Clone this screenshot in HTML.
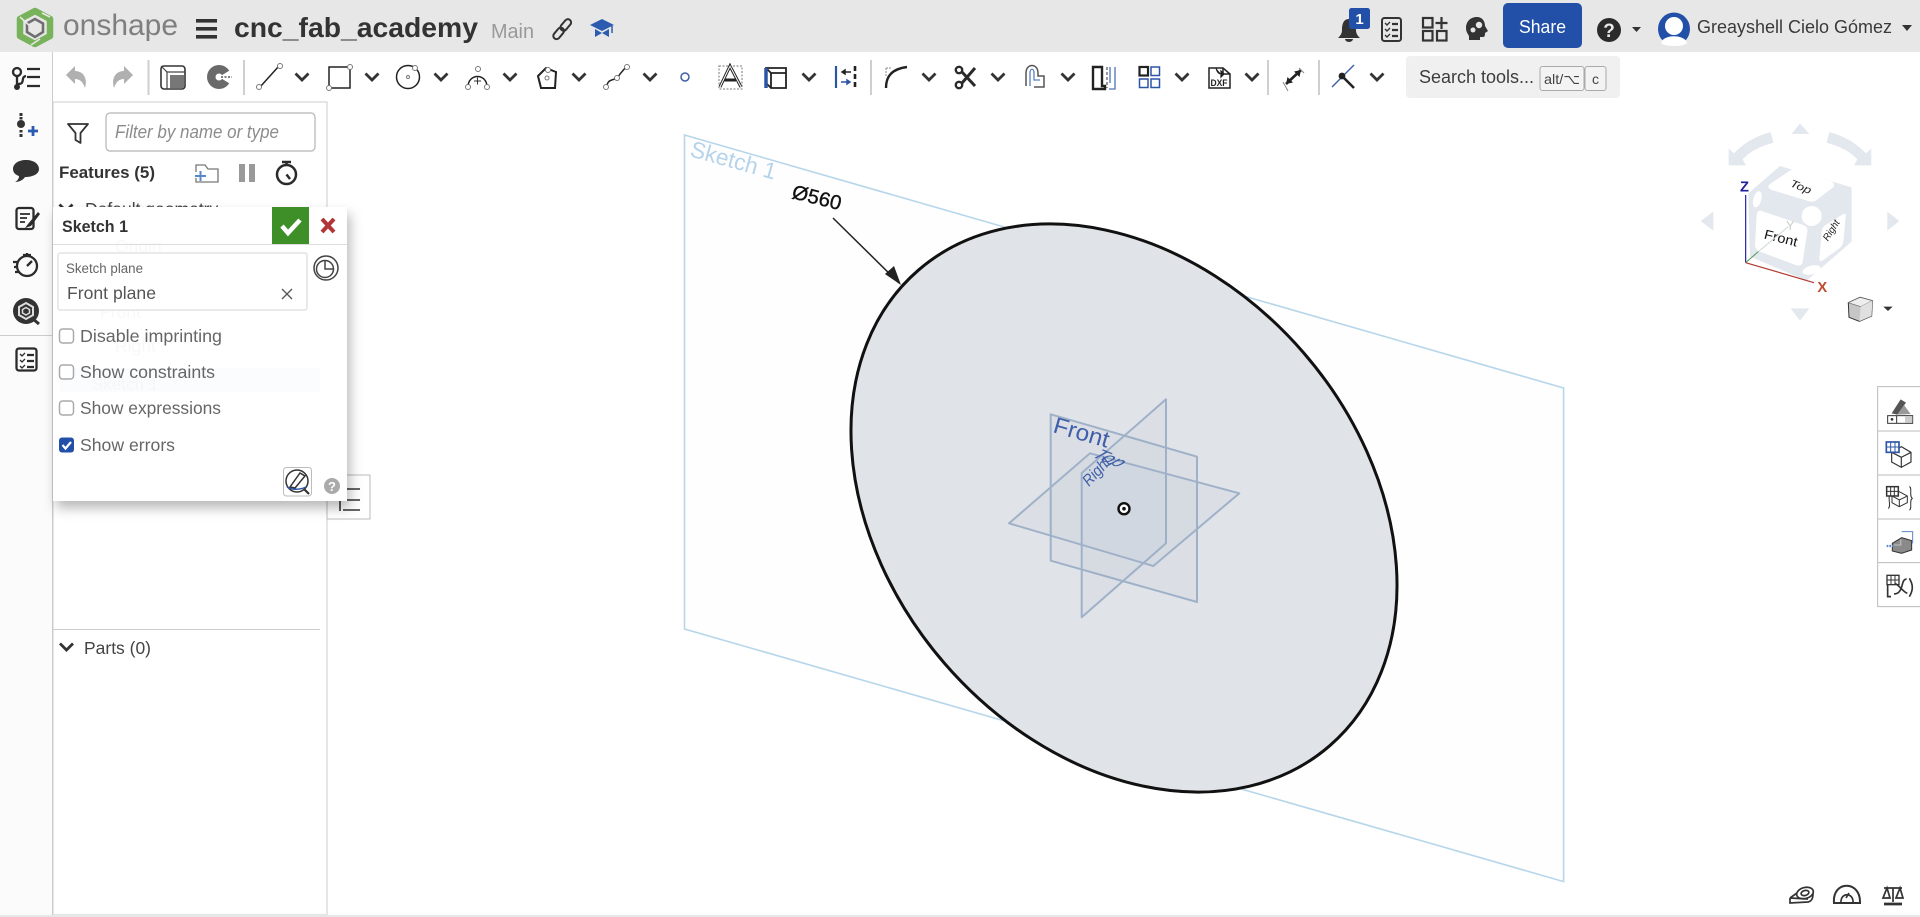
<!DOCTYPE html>
<html lang="en">
<head>
<meta charset="utf-8">
<title>cnc_fab_academy - Onshape</title>
<style>
html,body{margin:0;padding:0;width:1920px;height:917px;overflow:hidden;background:#fff}
svg{display:block;font-family:"Liberation Sans","DejaVu Sans",sans-serif}
</style>
</head>
<body>
<svg xmlns="http://www.w3.org/2000/svg" width="1920" height="917" viewBox="0 0 1920 917">
<defs>
<path id="ch" d="M-6.5-3.5L0 3L6.5-3.5" fill="none" stroke="#333" stroke-width="2.8"/>
<filter id="sh" x="-10%" y="-10%" width="125%" height="125%"><feDropShadow dx="3" dy="7" stdDeviation="6" flood-color="#000" flood-opacity=".28"/></filter>
</defs>
<rect width="1920" height="917" fill="#fff"/>

<!-- viewport geometry -->
<polygon points="684.5,135 1563.6,388 1563.6,881.6 684.5,629" fill="#fefefe" stroke="#b7d6ea" stroke-width="1.6"/>
<text transform="translate(689,156) rotate(15.6)" font-size="23" fill="#b5d3ea" textLength="88" lengthAdjust="spacingAndGlyphs">Sketch 1</text>
<text transform="translate(791,198) rotate(14)" font-size="20" fill="#111" stroke="#111" stroke-width=".35" textLength="50" lengthAdjust="spacingAndGlyphs">Ø560</text>
<path d="M833 218L899 283" stroke="#222" stroke-width="1.5"/>
<polygon points="901,285 885,274 894,266" fill="#222"/>
<ellipse cx="1124" cy="508" rx="314.4" ry="237.4" transform="rotate(49.15 1124 508)" fill="#e0e4e8" stroke="#111" stroke-width="3"/>
<g stroke="#9fb1c8" stroke-width="2" fill="#9fb1c8" fill-opacity=".07" stroke-linejoin="round">
<polygon points="1050.7,414.3 1197,456.7 1197,602 1050.7,560.7"/>
<polygon points="1166,399.3 1166,543.3 1081.7,617.3 1081.7,473"/>
<polygon points="1009,523.3 1090,453.3 1239.3,493.3 1153.3,566"/>
</g>
<text transform="translate(1052,432) rotate(16)" font-size="23" fill="#3f5fa8" textLength="57" lengthAdjust="spacingAndGlyphs">Front</text>
<text transform="translate(1089,487) rotate(-47)" font-size="16" font-style="italic" fill="#3f5fa8" textLength="33" lengthAdjust="spacingAndGlyphs">Right</text>
<text transform="translate(1090,456) rotate(22) skewX(-40)" font-size="16" fill="#3f5fa8" textLength="30" lengthAdjust="spacingAndGlyphs">Top</text>
<circle cx="1124" cy="508.7" r="5.5" fill="#fff" stroke="#111" stroke-width="2.4"/>
<circle cx="1124" cy="508.7" r="1.8" fill="#111"/>

<!-- header -->
<rect width="1920" height="52" fill="#e7e7e7"/>
<g fill="none">
<polygon points="35,11 50,19 50,36 35,44 20,36 20,19" stroke="#78b25a" stroke-width="6.5" stroke-linejoin="round"/>
<polygon points="35,19 43,23.5 43,32 35,37 27,32 27,23.5" stroke="#6f6f6f" stroke-width="2.6"/>
<path d="M20 17L30 26M50 17L42 13M31 45L40 39" stroke="#e7e7e7" stroke-width="1.6"/>
</g>
<text x="63" y="35" font-size="30" fill="#7f7f7f" textLength="115" lengthAdjust="spacingAndGlyphs">onshape</text>
<g fill="#333"><rect x="196" y="19" width="21" height="3.6"/><rect x="196" y="27" width="21" height="3.6"/><rect x="196" y="35" width="21" height="3.6"/></g>
<text x="234" y="37" font-size="28" font-weight="700" fill="#333" textLength="244" lengthAdjust="spacingAndGlyphs">cnc_fab_academy</text>
<text x="491" y="38" font-size="20" fill="#999" textLength="43" lengthAdjust="spacingAndGlyphs">Main</text>
<g fill="none" stroke="#333" stroke-width="2" transform="rotate(-50 562 29)"><rect x="550" y="26" width="13" height="6.500" rx="3.200"/><rect x="561" y="26" width="13" height="6.500" rx="3.200"/></g>
<path d="M590 25L602 19L614 25L602 31Z" fill="#2b5cb0"/><path d="M595 29V37L602 33L609 37V29L602 33Z" fill="#2b5cb0"/><path d="M612 26V33" stroke="#2b5cb0" stroke-width="1.500"/>

<!-- bell -->
<path d="M1349 19C1343 19 1342 25 1342 30C1342 34 1340 36 1338 38H1360C1358 36 1356 34 1356 30C1356 25 1355 19 1349 19Z" fill="#333"/><path d="M1345 39a4 3 0 0 0 8 0Z" fill="#333"/>
<rect x="1349" y="8" width="21" height="21" rx="2.500" fill="#2250a8"/><text x="1359.500" y="24" font-size="15" font-weight="700" fill="#fff" text-anchor="middle">1</text>
<g fill="none" stroke="#333" stroke-width="2"><rect x="1382" y="18" width="19" height="23" rx="2.500"/><path d="M1385 23l2 2l3-3M1385 29l2 2l3-3M1385 35l2 2l3-3" stroke-width="1.400"/><path d="M1392 24h6M1392 30h6M1392 36h6" stroke-width="2.200"/></g>
<g fill="none" stroke="#333" stroke-width="2.200"><rect x="1423" y="18" width="9.500" height="9.500"/><rect x="1423" y="31" width="9.500" height="9.500"/><rect x="1437" y="31" width="9.500" height="9.500"/><path d="M1441.500 17V29M1435.500 23H1447.500"/></g>
<path d="M1477 17C1470 17 1466 22 1466 28C1466 32 1468 34 1469 36V40H1480V37H1483C1485 37 1485 35 1485 33L1488 31L1485 26C1485 21 1482 17 1477 17Z" fill="#333"/><circle cx="1479" cy="25" r="3.200" fill="#e7e7e7"/><circle cx="1473" cy="30" r="2.500" fill="#e7e7e7"/>
<rect x="1503" y="3" width="79" height="45" rx="5" fill="#2250a8"/>
<text x="1519" y="33" font-size="18" fill="#fff" textLength="47" lengthAdjust="spacingAndGlyphs">Share</text>
<circle cx="1609" cy="30" r="12" fill="#2b2b2b"/><text x="1609" y="37" font-size="19" font-weight="700" fill="#e7e7e7" text-anchor="middle">?</text>
<polygon points="1632,27 1641,27 1636.500,32" fill="#333"/>
<ellipse cx="1674" cy="29" rx="16" ry="16.500" fill="#2250a8"/><circle cx="1674" cy="26" r="9" fill="#fff"/><path d="M1661 43C1663 34 1685 34 1687 43C1683 47 1665 47 1661 43Z" fill="#fff"/>
<text x="1697" y="33" font-size="18" fill="#3a3a3a" textLength="195" lengthAdjust="spacingAndGlyphs">Greayshell Cielo Gómez</text>
<polygon points="1902,25 1912,25 1907,31" fill="#333"/>

<!-- toolbar -->
<g fill="#b0b0b0">
<path d="M66 75L75 66V71C83 71 88 78 85 88C83 82 80 79 75 79V84Z"/>
<path d="M133 75L124 66V71C116 71 111 78 114 88C116 82 119 79 124 79V84Z"/>
</g>
<g fill="#cfcfcf">
<rect x="147.500" y="60" width="2" height="35"/><rect x="243" y="60" width="2" height="35"/><rect x="870" y="60" width="2" height="35"/><rect x="1267" y="60" width="2" height="35"/><rect x="1318" y="60" width="2" height="35"/>
</g>
<rect x="161" y="66" width="24" height="23" rx="3" fill="#fff" stroke="#333" stroke-width="1.600"/><path d="M161 66L167 72H185M167 72V89" fill="none" stroke="#444" stroke-width="1.200"/><rect x="170" y="75" width="14" height="13" fill="#777"/>
<circle cx="219" cy="77" r="12" fill="#6a6a6a"/><path d="M219 77L232 69V85Z" fill="#fff"/><circle cx="219" cy="77" r="3.500" fill="#fff"/><path d="M221 77H232" stroke="#333" stroke-width="1.200" stroke-dasharray="2 1.500"/>

<g fill="none" stroke="#222" stroke-width="1.500">
<path d="M260 87L279 66"/><rect x="329" y="67" width="21" height="21"/>
<circle cx="408" cy="77" r="11.500"/>
<path d="M468 87C468 73 487 73 487 87"/>
<path d="M538 76L546 68L556 72L555 88H541Z" stroke-width="2"/>
<path d="M607 87C607 78 615 81 618 77C621 72 622 72 626 67"/>
<path d="M720 87L730 66L741 87M724 80H736" stroke-width="3"/><path d="M720 87L730 66L741 87" stroke="#fff" stroke-width="1"/>
<path d="M766 68H786V88H771L766 83ZM771 88V73L766 68M771 73H786" stroke-width="1.800"/>
<path d="M886 88C886 76 892 69 907 67" stroke-width="2.400"/>
<path d="M1209 68H1223L1230 74V88H1209Z"/><path d="M1223 68V74H1230"/>
</g>
<path d="M1026 86V73C1026 63 1038 63 1038 73V76H1044V87H1034" fill="none" stroke="#555" stroke-width="1.500"/>
<path d="M1030 86V73C1030 68 1034 68 1034 73V80H1040" fill="none" stroke="#5a7fc0" stroke-width="1.300"/>
<g fill="#fff" stroke="#777" stroke-width="1"><circle cx="259" cy="87" r="2.500"/><circle cx="280" cy="66" r="2.500"/><circle cx="329" cy="88" r="2.500"/><circle cx="350" cy="67" r="2.500"/><circle cx="415" cy="68" r="2.500"/><circle cx="408" cy="77" r="1.500"/><circle cx="468" cy="87" r="2.500"/><circle cx="487" cy="87" r="2.500"/><circle cx="478" cy="69" r="2.500"/><circle cx="548" cy="70" r="2.500"/><circle cx="547" cy="78" r="2"/><circle cx="606" cy="87" r="2.500"/><circle cx="627" cy="67" r="2.500"/><circle cx="617" cy="78" r="2.500"/></g>
<path d="M474 81H481M477.500 77.500V84.500" stroke="#333" stroke-width="1"/>
<circle cx="685" cy="77" r="4" fill="none" stroke="#3d5fa8" stroke-width="1.500"/>
<rect x="719" y="66" width="23" height="23" fill="none" stroke="#777" stroke-width="1" stroke-dasharray="2 1.500"/>
<path d="M766 68V88" stroke="#2d55a5" stroke-width="3.500"/>
<path d="M836 66V88" stroke="#2d55a5" stroke-width="2.200"/><path d="M855 66V88" stroke="#222" stroke-width="2.600" stroke-dasharray="5 3"/><path d="M851 72H842M842 72l3-2v4z" stroke="#222" stroke-width="1.500" fill="#222"/><path d="M841 82H850M850 82l-3-2v4z" stroke="#2d55a5" stroke-width="1.500" fill="#2d55a5"/>
<path d="M886 68H892M886 68V76" stroke="#888" stroke-width="1" stroke-dasharray="2 1"/>
<g fill="none" stroke="#2a2a2a"><circle cx="959" cy="70" r="3.200" stroke-width="2.400"/><circle cx="959" cy="85" r="3.200" stroke-width="2.400"/><path d="M962 72L975 86M962 83L975 68" stroke-width="3"/></g>
<path d="M1093 67H1102V86H1105V89H1093Z" fill="#fff" stroke="#222" stroke-width="2.400"/><path d="M1107 67V88" stroke="#555" stroke-width="1.200" stroke-dasharray="3 2"/><path d="M1115 67V89H1109M1110 67V83" fill="none" stroke="#4f74b8" stroke-width="1.300"/>
<g fill="none" stroke="#2d55a5" stroke-width="1.500"><rect x="1139.500" y="67" width="8.500" height="8.500" stroke="#222" stroke-width="2.200"/><rect x="1151" y="67" width="8.500" height="8.500"/><rect x="1139.500" y="79" width="8.500" height="8.500"/><rect x="1151" y="79" width="8.500" height="8.500"/></g>
<text x="1210.500" y="86" font-size="9.500" font-weight="700" fill="#222" textLength="17" lengthAdjust="spacingAndGlyphs">DXF</text><path d="M1216 68C1217 72 1219 74 1221 74M1221 71v6l3-3z" fill="#222" stroke="#222" stroke-width="1.200"/>
<path d="M1286 84L1301 70" stroke="#222" stroke-width="2.600"/><path d="M1301 70l-7 1.500l5.500 5.500zM1286 84l7-1.500l-5.500-5.500z" fill="#222"/><path d="M1283 82L1288 91M1299 68L1304 73" stroke="#888" stroke-width="1"/>
<path d="M1332 87L1354 65" stroke="#3d5fa8" stroke-width="1.400"/><circle cx="1342" cy="76" r="3.400" fill="#222"/><path d="M1343 77L1354 88" stroke="#222" stroke-width="2.600"/>
<use href="#ch" x="302" y="77"/><use href="#ch" x="372" y="77"/><use href="#ch" x="441" y="77"/><use href="#ch" x="510" y="77"/><use href="#ch" x="579" y="77"/><use href="#ch" x="650" y="77"/><use href="#ch" x="809" y="77"/><use href="#ch" x="929" y="77"/><use href="#ch" x="998" y="77"/><use href="#ch" x="1068" y="77"/><use href="#ch" x="1182" y="77"/><use href="#ch" x="1252" y="77"/><use href="#ch" x="1377" y="77"/>
<rect x="1406" y="56" width="214" height="42" rx="4" fill="#f0f0f0"/>
<text x="1419" y="83" font-size="18" fill="#3d3d3d" textLength="115" lengthAdjust="spacingAndGlyphs">Search tools...</text>
<rect x="1540" y="66.500" width="44" height="24" rx="2.500" fill="#f3f3f3" stroke="#aaa"/><text x="1544" y="84" font-size="14" fill="#444" textLength="36" lengthAdjust="spacingAndGlyphs">alt/⌥</text>
<rect x="1585" y="66.500" width="21" height="24" rx="2.500" fill="#f3f3f3" stroke="#aaa"/><text x="1595.500" y="84" font-size="14" fill="#444" text-anchor="middle">c</text>

<!-- left rail -->
<rect x="0" y="52" width="52" height="865" fill="#fbfbfb"/>
<rect x="52" y="52" width="1" height="863" fill="#ccc"/>
<g fill="none" stroke="#2b2b2b" stroke-width="2.300"><circle cx="17" cy="72" r="4"/><path d="M17 76V87M18 84C26 84 20 77 26 76M27 69H40M27 77H40M27 86H40"/></g><circle cx="17" cy="87" r="3" fill="#2b2b2b"/>
<g fill="#333"><circle cx="21" cy="124" r="4"/><rect x="19.500" y="113" width="3" height="3"/><rect x="19.500" y="117" width="3" height="2.500"/><rect x="19.500" y="130" width="3" height="2.500"/><rect x="19.500" y="134" width="3" height="3"/></g><path d="M28 131H38M33 126V136" stroke="#2b5cb0" stroke-width="2.800"/>
<path d="M26 160C18 160 13 164 13 169C13 173 16 175 19 176C19 179 17 181 15 182C20 182 24 179 25 177C33 177 39 174 39 169C39 164 34 160 26 160Z" fill="#333"/>
<g fill="none" stroke="#2b2b2b"><rect x="16.500" y="208" width="17" height="21" rx="2.500" stroke-width="2.300"/><path d="M20 214H30M20 218H27M20 222H25" stroke-width="1.800"/></g><path d="M38 212L28 224L25 228L31 226L40 214Z" fill="#2b2b2b"/>
<g fill="none" stroke="#2b2b2b" stroke-width="2.300"><circle cx="27" cy="266" r="10"/><path d="M23 255H31M27 255V253M27 266L32 261M13 262H17M14 267H18M15 272H19"/></g>
<circle cx="26" cy="311" r="13" fill="#333"/><polygon points="26,303 33,307 33,315 26,319 19,315 19,307" fill="none" stroke="#ddd" stroke-width="2"/><polygon points="26,307.500 29.500,309.500 29.500,313 26,315 22.500,313 22.500,309.500" fill="none" stroke="#ddd" stroke-width="1.500"/><path d="M33 319L39 324" stroke="#333" stroke-width="3"/>
<rect x="0" y="335" width="52" height="1" fill="#ccc"/>
<g fill="none" stroke="#2b2b2b"><rect x="16.500" y="348.500" width="20" height="22" rx="2.500" stroke-width="2.300"/><path d="M20 354l2 2l3-3M20 360l2 2l3-3M20 366l2 2l3-3" stroke-width="1.300"/><path d="M27 355H34M27 361H34M27 367H34" stroke-width="2.200"/></g>

<!-- feature panel -->
<rect x="53" y="102" width="274" height="813" fill="#fff" stroke="#ccc"/>
<path d="M68 124H88L80.500 133V143L75.500 140V133Z" fill="none" stroke="#333" stroke-width="1.800" stroke-linejoin="round"/>
<rect x="106" y="113" width="209" height="38" rx="4" fill="#fff" stroke="#b5b5b5" stroke-width="1.200"/>
<text x="115" y="138" font-size="18" font-style="italic" fill="#8c8c8c" textLength="164" lengthAdjust="spacingAndGlyphs">Filter by name or type</text>
<text x="59" y="178" font-size="17" font-weight="700" fill="#333" textLength="96" lengthAdjust="spacingAndGlyphs">Features (5)</text>
<path d="M196 172V165H205L208 169H218V182H196V178" fill="none" stroke="#777" stroke-width="1.300"/><path d="M195 176H206M200.500 171V181" stroke="#5a86cc" stroke-width="2"/>
<rect x="239" y="164" width="6" height="18" fill="#999"/><rect x="249" y="164" width="6" height="18" fill="#999"/>
<g fill="none" stroke="#2b2b2b" stroke-width="2.500"><circle cx="286.500" cy="174.500" r="9.500"/><path d="M282 162H291M286.500 162V165M286.500 174.500L290 179"/></g>
<use href="#ch" x="66" y="208"/><text x="85" y="215" font-size="17.500" fill="#444">Default geometry</text>
<text x="84" y="654" font-size="17.500" fill="#444" textLength="67" lengthAdjust="spacingAndGlyphs">Parts (0)</text>
<use href="#ch" x="66.500" y="647" />
<rect x="53" y="629" width="267" height="1" fill="#ccc"/>
<rect x="327" y="475" width="43" height="44" fill="#fff" stroke="#bbb"/>
<path d="M347 489H360M343 500H360M343 510H360" stroke="#333" stroke-width="1.400"/><path d="M340 501V511" stroke="#333" stroke-width="1.600"/>

<!-- sketch dialog -->
<rect x="53" y="207" width="294" height="294" fill="#fff" filter="url(#sh)"/>
<rect x="54" y="245" width="292" height="255" fill="#fff"/>
<g fill="#f8f8f8" font-size="17.500"><text x="115" y="252">Origin</text><text x="115" y="287">Top</text><text x="100" y="318">Front</text><text x="115" y="352">Right</text></g>
<rect x="60" y="368" width="260" height="24" fill="#fbfcfe"/>
<text x="92" y="390" font-size="17" fill="#f6f6f6">Sketch 1</text>
<rect x="53" y="244" width="294" height="1" fill="#ddd"/>
<text x="62" y="232" font-size="17" font-weight="700" fill="#333" textLength="66" lengthAdjust="spacingAndGlyphs">Sketch 1</text>
<rect x="272" y="207" width="37" height="37" fill="#3f8f29"/>
<path d="M282 226L288 233L300 220" fill="none" stroke="#fff" stroke-width="4.500"/>
<path d="M322 219L334 232M334 219L322 232" stroke="#b13438" stroke-width="4"/>
<rect x="58" y="253" width="249" height="57" rx="2" fill="#fff" stroke="#ddd" stroke-width="1.200"/>
<text x="66" y="273" font-size="13.500" fill="#666" textLength="77" lengthAdjust="spacingAndGlyphs">Sketch plane</text>
<text x="67" y="299" font-size="17.500" fill="#555" textLength="89" lengthAdjust="spacingAndGlyphs">Front plane</text>
<path d="M282 289L292 299M292 289L282 299" stroke="#555" stroke-width="1.300"/>
<g fill="none" stroke="#444" stroke-width="1.500"><circle cx="326" cy="268" r="12"/><circle cx="325" cy="269" r="8.500"/><path d="M325 260.500V269H333.500"/></g>
<g fill="#fff" stroke="#aaa" stroke-width="1.500"><rect x="59.500" y="329" width="14" height="14" rx="3"/><rect x="59.500" y="365" width="14" height="14" rx="3"/><rect x="59.500" y="401" width="14" height="14" rx="3"/></g>
<rect x="59" y="437.500" width="15" height="15" rx="3" fill="#2250a8"/><path d="M62.500 445L65.500 448.500L71 442" fill="none" stroke="#fff" stroke-width="2.200"/>
<g font-size="17.500" fill="#666">
<text x="80" y="342" textLength="142" lengthAdjust="spacingAndGlyphs">Disable imprinting</text>
<text x="80" y="378" textLength="135" lengthAdjust="spacingAndGlyphs">Show constraints</text>
<text x="80" y="414" textLength="141" lengthAdjust="spacingAndGlyphs">Show expressions</text>
<text x="80" y="451" textLength="95" lengthAdjust="spacingAndGlyphs">Show errors</text>
</g>
<rect x="283.500" y="467.500" width="28" height="28.500" rx="3" fill="#fff" stroke="#bbb"/>
<g fill="none" stroke="#333" stroke-width="1.500"><circle cx="297" cy="481" r="11"/><path d="M290 487L300 473L305 476L295 488Z"/><path d="M304 489L309 494" stroke-width="2.200"/></g><path d="M287 487C292 490 300 490 306 487" fill="none" stroke="#2d55a5" stroke-width="1.500"/>
<circle cx="332" cy="486" r="8" fill="#aaa"/><text x="332" y="491" font-size="13" font-weight="700" fill="#fff" text-anchor="middle">?</text>

<!-- nav cube -->
<g transform="translate(1680 110) scale(.3333)">
<g fill="#e3e7ee">
<polygon points="360,40 335,72 388,72"/><polygon points="62,333 100,305 100,362"/><polygon points="658,333 622,305 622,362"/><polygon points="360,632 332,595 388,595"/>
<path d="M272 66L280 98C238 110 208 126 188 148L198 166H146V116L162 130C190 100 228 78 272 66Z"/>
<path d="M448 66L440 98C482 110 512 126 532 148L522 166H574V116L558 130C530 100 492 78 448 66Z"/>
<polygon points="300,168 515,232 515,395 380,512 210,440 205,250"/>
</g>
<g fill="#fff">
<path d="M350 180L455 215Q470 225 455 235L410 270Q400 278 385 273L275 240Q258 232 270 222L325 185Q335 176 350 180Z"/>
<path d="M245 303L370 345Q385 352 382 365L368 455Q365 470 350 466L240 425Q225 418 225 405L230 315Q232 298 245 303Z"/>
<path d="M490 312Q500 308 497 320L490 395Q488 408 478 415L430 450Q418 458 418 445L425 365Q426 352 435 346Z"/>
<circle cx="395" cy="318" r="30"/><ellipse cx="232" cy="268" rx="12" ry="25" transform="rotate(15 232 268)"/><ellipse cx="395" cy="480" rx="28" ry="13" transform="rotate(-15 395 480)"/>
</g>
<text transform="translate(328 228) rotate(22)" font-size="32" font-style="italic" fill="#222" textLength="66" lengthAdjust="spacingAndGlyphs">Top</text>
<text transform="translate(250 385) rotate(14)" font-size="40" fill="#111" textLength="102" lengthAdjust="spacingAndGlyphs">Front</text>
<text transform="translate(444 395) rotate(-58)" font-size="30" font-style="italic" fill="#222" textLength="68" lengthAdjust="spacingAndGlyphs">Right</text>
<path d="M197 255V458" stroke="#1f1fa0" stroke-width="3.500"/>
<path d="M197 458L235 425" stroke="#4c9a50" stroke-width="3"/><path d="M235 425L325 350" stroke="#cfd8cf" stroke-width="3"/>
<path d="M197 458L402 518" stroke="#b03a30" stroke-width="3.500"/>
<text x="180" y="245" font-size="44" font-weight="700" fill="#1f1fa0">Z</text>
<text x="318" y="360" font-size="38" fill="#c8cec8">Y</text>
<text x="412" y="546" font-size="44" font-weight="700" fill="#c04a30">X</text>
<polygon points="505,578 540,562 577,572 575,618 538,634 507,622" fill="#c6c6c6" stroke="#333" stroke-width="3"/>
<polygon points="505,578 540,562 577,572 542,590" fill="#eee" stroke="#666" stroke-width="2"/>
<polygon points="542,590 577,572 575,618 538,634" fill="#e0e0e0"/>
<polygon points="610,590 638,590 624,603" fill="#333"/>
</g>

<!-- right tool strip -->
<g transform="translate(1780 370) scale(.3333)">
<path d="M420 50H293V710H420" fill="#fff" stroke="#bbb" stroke-width="3"/>
<path d="M293 183H420M293 315H420M293 447H420M293 578H420" stroke="#bbb" stroke-width="3"/>
<polygon points="335,130 362,88 378,98 352,134" fill="#555"/><polygon points="352,134 372,105 392,132" fill="#999"/>
<rect x="323" y="137" width="75" height="23" fill="#fff" stroke="#333" stroke-width="3"/><rect x="375" y="139" width="22" height="19" fill="#ccc"/><circle cx="336" cy="148" r="4" fill="#333"/><path d="M350 137V160" stroke="#333" stroke-width="3"/>
<g fill="none" stroke="#333" stroke-width="3.500"><polygon points="364,230 393,247 393,276 364,292 335,276 335,247"/><path d="M335 247L364 262L393 247M364 262V292"/></g>
<rect x="319" y="216" width="38" height="31" fill="#fff" stroke="#2d55a5" stroke-width="5"/><path d="M319 231H357M332 216V247M345 216V247" stroke="#2d55a5" stroke-width="3"/>
<g fill="none" stroke="#333" stroke-width="3"><polygon points="358,365 382,378 382,398 358,410 336,398 336,378"/><path d="M336 378L358 390L382 378M358 390V410"/><path d="M388 350C398 352 386 382 398 385C386 388 398 418 388 420M332 375C320 378 336 412 324 415" /></g>
<rect x="320" y="350" width="35" height="28" fill="#fff" stroke="#333" stroke-width="4.500"/><path d="M320 364H355M332 350V378M343 350V378" stroke="#333" stroke-width="3"/>
<polygon points="337,520 365,503 395,512 395,540 365,550 337,543" fill="#8a8a8a" stroke="#333" stroke-width="3"/><path d="M342 525H362V508" fill="none" stroke="#bbb" stroke-width="4"/><path d="M365 485H398V520" fill="none" stroke="#5a86cc" stroke-width="3"/><path d="M320 528H340" stroke="#5a86cc" stroke-width="7" stroke-dasharray="5 3"/>
<g fill="none" stroke="#333"><rect x="321" y="616" width="36" height="28" stroke-width="4"/><path d="M321 630H357M333 616V644M345 616V644" stroke-width="3"/><path d="M323 644V680H333" stroke-width="5"/><path d="M388 625C400 645 400 660 388 680M342 672C355 672 362 665 368 640C372 625 380 628 380 628M345 640C360 648 368 665 382 670" stroke-width="5"/></g>
</g>

<!-- bottom tools -->
<g fill="none" stroke="#333" stroke-width="1.700">
<ellipse cx="1805" cy="893" rx="8.500" ry="5.500" transform="rotate(-15 1805 893)"/><ellipse cx="1805" cy="893" rx="4" ry="2.500" transform="rotate(-15 1805 893)"/>
<path d="M1790 898L1797 893M1790 898V903L1808 902C1813 901 1813 896 1813 893M1790 898L1808 899"/>
<path d="M1834 903C1832 880 1861 880 1860 903Z" stroke-width="2"/><path d="M1841 903C1840 892 1854 892 1853 903"/><path d="M1846 898L1849 893" />
<path d="M1893 888V902M1884 888H1902M1883 898L1887 888L1890 898ZM1896 898L1900 888L1903 898Z"/><path d="M1884 904H1902" stroke-width="2.800"/>
</g>
<rect x="0" y="915" width="1920" height="2" fill="#e7e7e7"/>
</svg>
</body>
</html>
